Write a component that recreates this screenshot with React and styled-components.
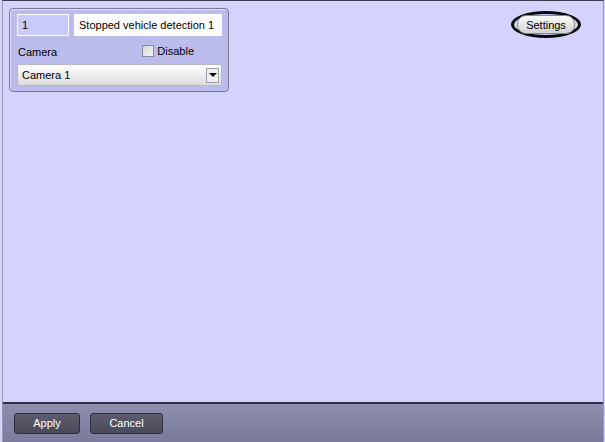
import React from "react";
import styled, { createGlobalStyle } from "styled-components";

const Global = createGlobalStyle`
  html, body { margin: 0; padding: 0; background: #d3d3fd; }
  body { font-family: "Liberation Sans", Arial, sans-serif; font-size: 11px; color: #000; }
`;

const Frame = styled.div`
  height: 442px;
  width: 602px;
  margin-left: 2px;
  box-sizing: border-box;
  display: flex;
  flex-direction: column;
  background: #d3d3fd;
  border-top: 1px solid #3c3c50;
  border-left: 1px solid #9898b0;
  border-right: 1px solid #9898b0;
`;

const Canvas = styled.div`
  flex: 1;
  display: flex;
  justify-content: space-between;
  align-items: flex-start;
  padding: 7px 22px 0 6px;
`;

const Panel = styled.div`
  width: 220px;
  height: 84px;
  box-sizing: border-box;
  background: #bcbcec;
  border: 1px solid #7a7a98;
  border-radius: 4px;
  box-shadow: inset 1px 1px 0 #dcdcff;
  padding: 4px 6px 0 7px;
  display: flex;
  flex-direction: column;
`;

const Row = styled.div`
  display: flex;
  align-items: center;
  justify-content: space-between;
  height: ${(p) => p.h}px;
`;

const Field = styled.div`
  box-sizing: border-box;
  width: ${(p) => p.w}px;
  height: 22px;
  background: ${(p) => (p.light ? "#cacafa" : "#ffffff")};
  border: 1px solid #ffffff;
  padding: 0 4px;
  display: flex;
  align-items: center;
  font-size: 11px;
  white-space: nowrap;
`;

const Label = styled.span`
  font-size: 11px;
  padding-left: 1px;
  padding-top: 3px;
`;

const Check = styled.label`
  display: flex;
  align-items: center;
  gap: 3px;
  margin-right: 28px;
  padding-top: 2px;
  font-size: 11px;
`;

const Box = styled.span`
  width: 12px;
  height: 12px;
  box-sizing: border-box;
  border: 1px solid #8a8aa0;
  background: linear-gradient(135deg, #d4d4d8, #f6f6f8);
`;

const Combo = styled.div`
  box-sizing: border-box;
  width: 205px;
  height: 22px;
  display: flex;
  align-items: center;
  justify-content: space-between;
  background: linear-gradient(#ffffff, #dcdcdc);
  border: 1px solid #b8b8c8;
  padding: 0 2px 0 4px;
  font-size: 11px;
`;

const Arrow = styled.span`
  width: 13px;
  height: 15px;
  box-sizing: border-box;
  background: #f0f0f0;
  border: 1px solid #a0a0a8;
  display: flex;
  align-items: center;
  justify-content: center;
  &::after {
    content: "";
    border-left: 4px solid transparent;
    border-right: 4px solid transparent;
    border-top: 4px solid #000;
  }
`;

const SettingsRing = styled.div`
  margin-top: 3px;
  width: 70px;
  height: 27px;
  box-sizing: border-box;
  border: 3px solid #0a0a0a;
  border-radius: 50%;
  display: flex;
  align-items: center;
  justify-content: center;
`;

const SettingsButton = styled.button`
  width: 58px;
  height: 19px;
  border: 1px solid #8a8a8a;
  border-radius: 9px;
  background: linear-gradient(#fbfbfb, #d2d2d2);
  font-family: inherit;
  font-size: 11px;
  padding: 0;
  color: #000;
`;

const Footer = styled.div`
  height: 38px;
  border-top: 2px solid #2f2f48;
  background: linear-gradient(#8e8eae, #7a7a9c);
  display: flex;
  align-items: center;
  gap: 10px;
  padding: 0 0 0 11px;
`;

const FootButton = styled.button`
  width: ${(p) => p.w}px;
  height: 21px;
  box-sizing: border-box;
  border: 1px solid #2e2e3e;
  border-radius: 3px;
  background: linear-gradient(#5c5c6e, #4a4a5a);
  color: #fff;
  font-family: inherit;
  font-size: 11px;
  padding: 0;
`;

export default function App() {
  return (
    <>
      <Global />
      <Frame>
        <Canvas>
          <Panel>
            <Row h={23}>
              <Field w={52} light>1</Field>
              <Field w={148}>Stopped vehicle detection 1</Field>
            </Row>
            <Row h={28}>
              <Label>Camera</Label>
              <Check>
                <Box />
                Disable
              </Check>
            </Row>
            <Combo>
              <span>Camera 1</span>
              <Arrow />
            </Combo>
          </Panel>
          <SettingsRing>
            <SettingsButton>Settings</SettingsButton>
          </SettingsRing>
        </Canvas>
        <Footer>
          <FootButton w={66}>Apply</FootButton>
          <FootButton w={73}>Cancel</FootButton>
        </Footer>
      </Frame>
    </>
  );
}
